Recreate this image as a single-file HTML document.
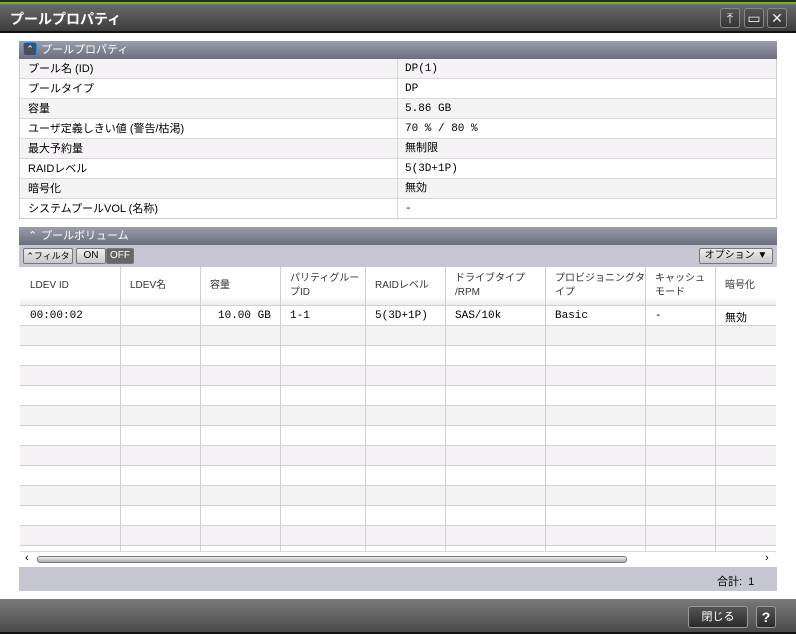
<!DOCTYPE html>
<html><head><meta charset="utf-8"><style>
*{margin:0;padding:0;box-sizing:border-box}
body{width:796px;height:634px;overflow:hidden;background:#fff;font-family:"Liberation Sans","Noto Sans CJK JP",sans-serif;font-size:11px;color:#000;position:relative}
.abs{position:absolute}
.title{left:0;top:0;width:796px;height:33px;background:linear-gradient(#2a2a2a 0,#2a2a2a 2px,#6fb52c 2px,#6fb52c 4px,#6a6a6a 4px,#3c3c3c 31px,#111 31px)}
.title span{position:absolute;left:10px;top:9px;color:#fff;font-size:14px;font-weight:bold}
.wb{top:8px;width:20px;height:20px;border:1px solid #888;border-radius:3px;background:linear-gradient(#555,#333);color:#eee;text-align:center;line-height:18px;font-size:14px}
.sh{left:19px;width:758px;height:18px;background:linear-gradient(#9a9dab,#6b6e7c);color:#fff;font-size:11px;line-height:18px;padding-left:22px}
.row{left:20px;width:756px;height:20px;border-bottom:1px solid #d8d8d8;line-height:20px}
.row .l{position:absolute;left:8px}
.row .v{position:absolute;left:377px;top:0;height:19px;border-left:1px solid #d8d8d8;padding-left:7px;font-family:"Liberation Mono","Noto Sans CJK JP",monospace}
.tb{left:19px;top:245px;width:758px;height:22px;background:#c6c6d3}
.btn{top:3px;height:16px;border:1px solid #777;border-radius:2px;background:linear-gradient(#eee,#c8c8c8);font-size:10px;line-height:14px;text-align:center;white-space:nowrap;overflow:hidden}
.grid{left:20px;top:267px;width:756px;height:284px;overflow:hidden;background:#fff}
.c{position:absolute;top:0;bottom:0;border-left:1px solid #d0d0d0}
.hd{position:absolute;left:0;top:0;width:756px;height:39px;background:linear-gradient(#fff 80%,#ececf0);border-bottom:1px solid #d0d0d0}
.ht{position:absolute;font-size:10px;color:#333;line-height:14px;white-space:nowrap}
.br{position:absolute;left:0;width:756px;height:20px;border-bottom:1px solid #d0d0d0}
.dt{position:absolute;top:310px;font-family:"Liberation Mono","Noto Sans CJK JP",monospace;font-size:11px}
</style></head><body>
<div class="abs title"><span>プールプロパティ</span></div>
<div class="abs wb" style="left:720px">⤒</div>
<div class="abs wb" style="left:744px">▭</div>
<div class="abs wb" style="left:767px">✕</div>

<div class="abs sh" style="top:41px">プールプロパティ</div>
<div class="abs" style="left:23px;top:42px;width:14px;height:14px;border:1px solid #2a8ef0;border-radius:3px;background:#4a4d5a;color:#fff;font-size:9px;line-height:12px;text-align:center">⌃</div>
<div class="abs" style="left:19px;top:59px;width:758px;height:160px;border:1px solid #ccc;border-top:none"></div>
<div class="abs row" style="top:59px;background:#f6f3f6"><span class="l">プール名 (ID)</span><span class="v">DP(1)</span></div>
<div class="abs row" style="top:79px"><span class="l">プールタイプ</span><span class="v">DP</span></div>
<div class="abs row" style="top:99px;background:#f6f3f6"><span class="l">容量</span><span class="v">5.86 GB</span></div>
<div class="abs row" style="top:119px"><span class="l">ユーザ定義しきい値 (警告/枯渇)</span><span class="v">70 % / 80 %</span></div>
<div class="abs row" style="top:139px;background:#f6f3f6"><span class="l">最大予約量</span><span class="v">無制限</span></div>
<div class="abs row" style="top:159px"><span class="l">RAIDレベル</span><span class="v">5(3D+1P)</span></div>
<div class="abs row" style="top:179px;background:#f6f3f6"><span class="l">暗号化</span><span class="v">無効</span></div>
<div class="abs row" style="top:199px;border-bottom:none"><span class="l">システムプールVOL (名称)</span><span class="v">-</span></div>

<div class="abs sh" style="top:227px;height:18px">プールボリューム</div>
<div class="abs" style="left:28px;top:227px;color:#fff;font-size:11px;line-height:18px">⌃</div>
<div class="abs tb">
<div class="abs btn" style="left:4px;width:50px;font-size:9px">⌃フィルタ</div>
<div class="abs btn" style="left:57px;width:30px">ON</div>
<div class="abs btn" style="left:87px;width:28px;background:#666;color:#fff">OFF</div>
<div class="abs btn" style="left:680px;width:74px">オプション ▼</div>
</div>

<div class="abs grid">
<div class="hd"></div>
<div class="br" style="top:39px;background:#fff"></div>
<div class="br" style="top:59px;background:#f5f1f5"></div>
<div class="br" style="top:79px"></div>
<div class="br" style="top:99px;background:#f5f1f5"></div>
<div class="br" style="top:119px"></div>
<div class="br" style="top:139px;background:#f5f1f5"></div>
<div class="br" style="top:159px"></div>
<div class="br" style="top:179px;background:#f5f1f5"></div>
<div class="br" style="top:199px"></div>
<div class="br" style="top:219px;background:#f5f1f5"></div>
<div class="br" style="top:239px"></div>
<div class="br" style="top:259px;background:#f5f1f5"></div>
<div class="br" style="top:279px"></div>
<div class="c" style="left:100px"></div><div class="c" style="left:180px"></div><div class="c" style="left:260px"></div><div class="c" style="left:345px"></div><div class="c" style="left:425px"></div><div class="c" style="left:525px"></div><div class="c" style="left:625px"></div><div class="c" style="left:695px"></div>
<div class="ht" style="left:10px;top:12px">LDEV ID</div>
<div class="ht" style="left:110px;top:12px">LDEV名</div>
<div class="ht" style="left:190px;top:12px">容量</div>
<div class="ht" style="left:270px;top:5px">パリティグルー<br>プID</div>
<div class="ht" style="left:355px;top:12px">RAIDレベル</div>
<div class="ht" style="left:435px;top:5px">ドライブタイプ<br>/RPM</div>
<div class="ht" style="left:535px;top:5px">プロビジョニングタ<br>イプ</div>
<div class="ht" style="left:635px;top:5px">キャッシュ<br>モード</div>
<div class="ht" style="left:705px;top:12px">暗号化</div>
</div>
<div class="dt" style="left:30px">00:00:02</div>
<div class="dt" style="left:218px">10.00 GB</div>
<div class="dt" style="left:290px">1-1</div>
<div class="dt" style="left:375px">5(3D+1P)</div>
<div class="dt" style="left:455px">SAS/10k</div>
<div class="dt" style="left:555px">Basic</div>
<div class="dt" style="left:655px">-</div>
<div class="dt" style="left:725px;font-family:'Liberation Sans','Noto Sans CJK JP',sans-serif;top:309px">無効</div>

<div class="abs" style="left:20px;top:551px;width:756px;height:16px;background:#fff;border-top:1px solid #ddd"></div>
<div class="abs" style="left:25px;top:552px;font-size:11px">‹</div>
<div class="abs" style="left:765px;top:552px;font-size:11px">›</div>
<div class="abs" style="left:37px;top:556px;width:590px;height:7px;border:1px solid #777;border-radius:3px;background:linear-gradient(#eee,#aaa)"></div>
<div class="abs" style="left:19px;top:567px;width:758px;height:24px;background:#c6c6d3"></div>
<div class="abs" style="left:717px;top:573px;font-size:11px">合計:&nbsp; 1</div>

<div class="abs" style="left:0;top:599px;width:796px;height:35px;background:linear-gradient(#7a7a7a,#4a4a4a 33px,#111 33px)"></div>
<div class="abs" style="left:688px;top:606px;width:60px;height:22px;border:1px solid #999;border-radius:3px;background:linear-gradient(#555,#2a2a2a);color:#fff;text-align:center;line-height:20px;font-size:11px">閉じる</div>
<div class="abs" style="left:756px;top:606px;width:20px;height:22px;border:1px solid #999;border-radius:3px;background:linear-gradient(#555,#2a2a2a);color:#fff;text-align:center;line-height:20px;font-size:14px;font-weight:bold">?</div>
</body></html>
